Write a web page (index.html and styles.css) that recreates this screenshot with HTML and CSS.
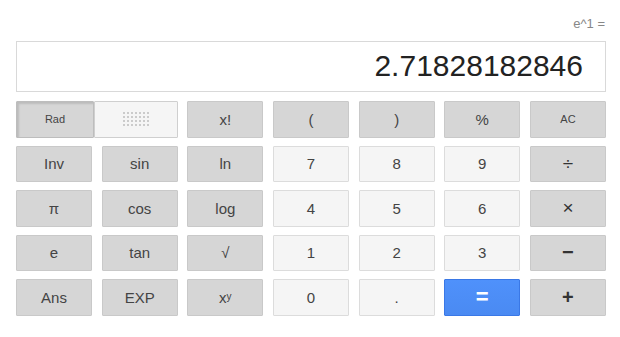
FILE: index.html
```html
<!DOCTYPE html>
<html>
<head>
<meta charset="utf-8">
<link rel="stylesheet" href="styles.css">
</head>
<body>
<div class="calc">
  <div class="expr">e^1 =</div>
  <div class="display">2.71828182846</div>
  <div class="keys">
    <div class="mode">
      <div class="key dark small pressed rad">Rad</div>
      <div class="key light deg"><span class="dots"></span></div>
    </div>
    <div class="key dark">x!</div>
    <div class="key dark">(</div>
    <div class="key dark">)</div>
    <div class="key dark">%</div>
    <div class="key dark small">AC</div>

    <div class="key dark">Inv</div>
    <div class="key dark">sin</div>
    <div class="key dark">ln</div>
    <div class="key light">7</div>
    <div class="key light">8</div>
    <div class="key light">9</div>
    <div class="key dark op">÷</div>

    <div class="key dark">π</div>
    <div class="key dark">cos</div>
    <div class="key dark">log</div>
    <div class="key light">4</div>
    <div class="key light">5</div>
    <div class="key light">6</div>
    <div class="key dark op">×</div>

    <div class="key dark">e</div>
    <div class="key dark">tan</div>
    <div class="key dark">√</div>
    <div class="key light">1</div>
    <div class="key light">2</div>
    <div class="key light">3</div>
    <div class="key dark bold">−</div>

    <div class="key dark">Ans</div>
    <div class="key dark">EXP</div>
    <div class="key dark">x<sup>y</sup></div>
    <div class="key light">0</div>
    <div class="key light">.</div>
    <div class="key blue">=</div>
    <div class="key dark bold">+</div>
  </div>
</div>
</body>
</html>
```
FILE: styles.css
```css
html, body {
  margin: 0;
  padding: 0;
  background: #fff;
}
body {
  font-family: "Liberation Sans", Arial, sans-serif;
}
.calc {
  width: 590px;
  padding: 16px 0 0 16px;
}
.expr {
  text-align: right;
  font-size: 13px;
  line-height: 16px;
  color: #878787;
  padding-right: 1px;
  margin-bottom: 9px;
}
.display {
  box-sizing: border-box;
  height: 51px;
  border: 1px solid #d9d9d9;
  text-align: right;
  font-size: 30px;
  line-height: 47px;
  color: #222;
  padding-right: 22px;
  margin-bottom: 9px;
}
.keys {
  display: grid;
  grid-template-columns: repeat(7, 76px);
  column-gap: 9.67px;
  row-gap: 8px;
  grid-auto-rows: 36.5px;
}
.mode {
  grid-column: span 2;
  display: flex;
}
.key {
  box-sizing: border-box;
  display: flex;
  align-items: center;
  justify-content: center;
  font-size: 15px;
  color: #444;
  border: 1px solid;
  border-radius: 1px;
}
.dark {
  background: #d6d6d6;
  border-color: #c9c9c9;
}
.light {
  background: #f5f5f5;
  border-color: #dcdcdc;
}
.blue {
  background: linear-gradient(#4f91fb, #4a8af2);
  border-color: #3a78e6;
  color: #fff;
  font-size: 22px;
  font-weight: bold;
}
.small {
  font-size: 11px;
}
.op {
  font-size: 19px;
  color: #333;
}
.bold {
  font-size: 20px;
  font-weight: bold;
  color: #333;
}
.rad {
  width: 78px;
  flex: none;
}
.pressed {
  box-shadow: inset 2px 2px 2px rgba(0,0,0,0.12);
  border-color: #bdbdbd;
}
.deg {
  flex: 1;
  border-color: #cfcfcf;
}
.dots {
  width: 26px;
  height: 14px;
  background-image: conic-gradient(#cbcbcb 25%, transparent 0);
  background-size: 4px 4px;
  background-position: -2px 0;
}
sup {
  font-size: 10px;
  vertical-align: 5px;
  line-height: 0;
}
```
